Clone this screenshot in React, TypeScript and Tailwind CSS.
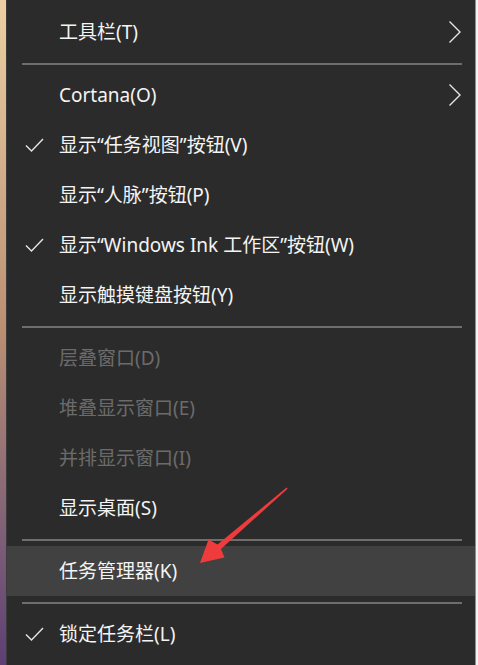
import React from "react";

type Item = {
  label: string;
  checked?: boolean;
  disabled?: boolean;
  submenu?: boolean;
  highlight?: boolean;
};

const Check = () => (
  <svg width="19" height="15" viewBox="0 0 19 15" className="absolute left-[18px] top-1/2 -translate-y-1/2">
    <polyline points="1,8 6.5,13.5 18,1.5" fill="none" stroke="#e6e6e6" strokeWidth="1.4" />
  </svg>
);

const Chevron = () => (
  <svg width="14" height="24" viewBox="0 0 14 24" className="absolute right-[13px] top-1/2 -translate-y-1/2">
    <polyline points="1.5,1.5 12,12 1.5,22.5" fill="none" stroke="#e6e6e6" strokeWidth="1.4" />
  </svg>
);

const Row = ({ item }: { item: Item }) => (
  <div
    className={
      "relative h-[50px] flex items-center pl-[52px] " +
      (item.highlight ? "bg-[#414141]" : "")
    }
  >
    {item.checked && <Check />}
    <span className={item.disabled ? "text-[#6b6b6b]" : "text-[#f4f4f4]"}>{item.label}</span>
    {item.submenu && <Chevron />}
  </div>
);

const Sep = () => (
  <div className="h-[13px] flex items-center pl-[15px] pr-[13px]">
    <div className="h-[2px] w-full bg-[#6e6e6e]" />
  </div>
);

export default function App() {
  return (
    <div
      className="relative w-[478px] h-[665px] flex overflow-hidden text-[19px] leading-none"
      style={{ fontFamily: '"Noto Sans", "Noto Sans CJK SC", sans-serif' }}
    >
      <div className="w-[6px] h-full bg-gradient-to-b from-[#ecd0a4] via-[#b98f72] to-[#5d3f74]" />
      <div className="w-[1px] h-full bg-[#3c3c3c]" />
      <div className="flex-1 h-full bg-[#2b2b2b] pt-[7px] flex flex-col">
        <Row item={{ label: "工具栏(T)", submenu: true }} />
        <Sep />
        <Row item={{ label: "Cortana(O)", submenu: true }} />
        <Row item={{ label: "显示“任务视图”按钮(V)", checked: true }} />
        <Row item={{ label: "显示“人脉”按钮(P)" }} />
        <Row item={{ label: "显示“Windows Ink 工作区”按钮(W)", checked: true }} />
        <Row item={{ label: "显示触摸键盘按钮(Y)" }} />
        <Sep />
        <Row item={{ label: "层叠窗口(D)", disabled: true }} />
        <Row item={{ label: "堆叠显示窗口(E)", disabled: true }} />
        <Row item={{ label: "并排显示窗口(I)", disabled: true }} />
        <Row item={{ label: "显示桌面(S)" }} />
        <Sep />
        <Row item={{ label: "任务管理器(K)", highlight: true }} />
        <Sep />
        <Row item={{ label: "锁定任务栏(L)", checked: true }} />
      </div>
      <div className="w-[1px] h-full bg-[#8c8c8c]" />
      <div className="w-[2px] h-full bg-[#f2f2f2]" />
      <svg
        className="absolute left-0 top-0 pointer-events-none"
        width="478"
        height="665"
        viewBox="0 0 478 665"
      >
        <polygon
          points="286.6,487.6 287.6,488.8 221,549 224.5,557.5 200,563 208.5,539.5 217.5,544.5"
          fill="#ee3b3b"
        />
      </svg>
    </div>
  );
}
